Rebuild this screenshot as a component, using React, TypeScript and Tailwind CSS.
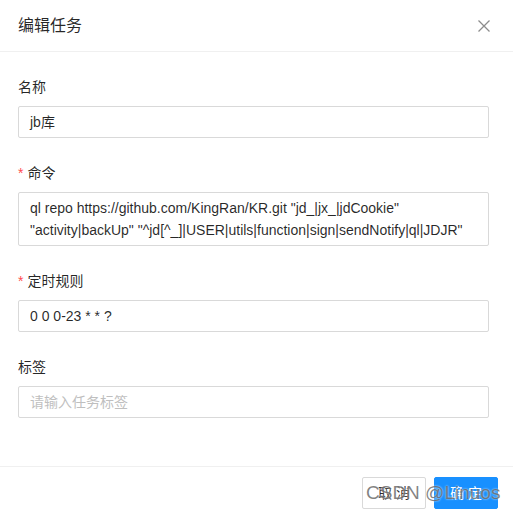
import React from "react";

const font = { fontFamily: '"Liberation Sans", "Noto Sans CJK SC", sans-serif' };

function Label({ text, required }: { text: string; required?: boolean }) {
  return (
    <div className="h-[22px] mb-2 flex items-center text-[14px] leading-[22px] text-[rgba(0,0,0,0.85)]">
      {required && <span className="text-[#ff4d4f] mr-1 text-[14px] leading-none">*</span>}
      <span>{text}</span>
    </div>
  );
}

export default function App() {
  return (
    <div className="relative w-[513px] h-[514px] bg-white overflow-hidden" style={font}>
      {/* header */}
      <div className="h-[52px] border-b border-[#f0f0f0] flex items-center justify-between pl-[18px] pr-[22px]">
        <div className="text-[16px] leading-[22px] text-[rgba(0,0,0,0.85)] font-normal">编辑任务</div>
        <svg width="14" height="14" viewBox="0 0 14 14">
          <path d="M1.5 1.5 L12.5 12.5 M12.5 1.5 L1.5 12.5" stroke="rgba(0,0,0,0.45)" strokeWidth="1.3" fill="none" />
        </svg>
      </div>
      {/* body */}
      <div className="pl-[18px] pr-[24px] pt-6 pb-6">
        <div className="mb-6">
          <Label text="名称" />
          <div className="h-8 border border-[#d9d9d9] rounded-[2px] px-[11px] flex items-center text-[14px] text-[rgba(0,0,0,0.85)]">
            jb库
          </div>
        </div>
        <div className="mb-6">
          <Label text="命令" required />
          <div className="border border-[#d9d9d9] rounded-[2px] px-[11px] py-1 text-[14px] leading-[22px] text-[rgba(0,0,0,0.85)] whitespace-nowrap overflow-hidden">
            <div>ql repo https://github.com/KingRan/KR.git "jd_|jx_|jdCookie"</div>
            <div>"activity|backUp" "^jd[^_]|USER|utils|function|sign|sendNotify|ql|JDJR"</div>
          </div>
        </div>
        <div className="mb-6">
          <Label text="定时规则" required />
          <div className="h-8 border border-[#d9d9d9] rounded-[2px] px-[11px] flex items-center text-[14px] text-[rgba(0,0,0,0.85)]">
            0 0 0-23 * * ?
          </div>
        </div>
        <div className="mb-6">
          <Label text="标签" />
          <div className="h-8 border border-[#d9d9d9] rounded-[2px] px-[11px] flex items-center text-[14px] text-[#bfbfbf]">
            请输入任务标签
          </div>
        </div>
      </div>
      {/* footer */}
      <div className="border-t border-[#f0f0f0] pt-[10px] pr-[15px] flex justify-end gap-2">
        <button className="h-8 w-[64px] border border-[#d9d9d9] rounded-[2px] bg-white text-[14px] text-[rgba(0,0,0,0.85)]">
          取 消
        </button>
        <button className="h-8 w-[64px] border border-[#1890ff] rounded-[2px] bg-[#1890ff] text-[14px] text-white">
          确 定
        </button>
      </div>
      {/* watermark */}
      <div
        className="absolute left-[366px] top-[481px] text-[19px] leading-[24px] text-[rgba(90,90,90,0.75)] whitespace-nowrap pointer-events-none"
        style={{ fontFamily: '"Liberation Sans", Arial, sans-serif', textShadow: "0 0 2px rgba(255,255,255,0.9)" }}
      >
        CSDN @Linuos
      </div>
    </div>
  );
}
